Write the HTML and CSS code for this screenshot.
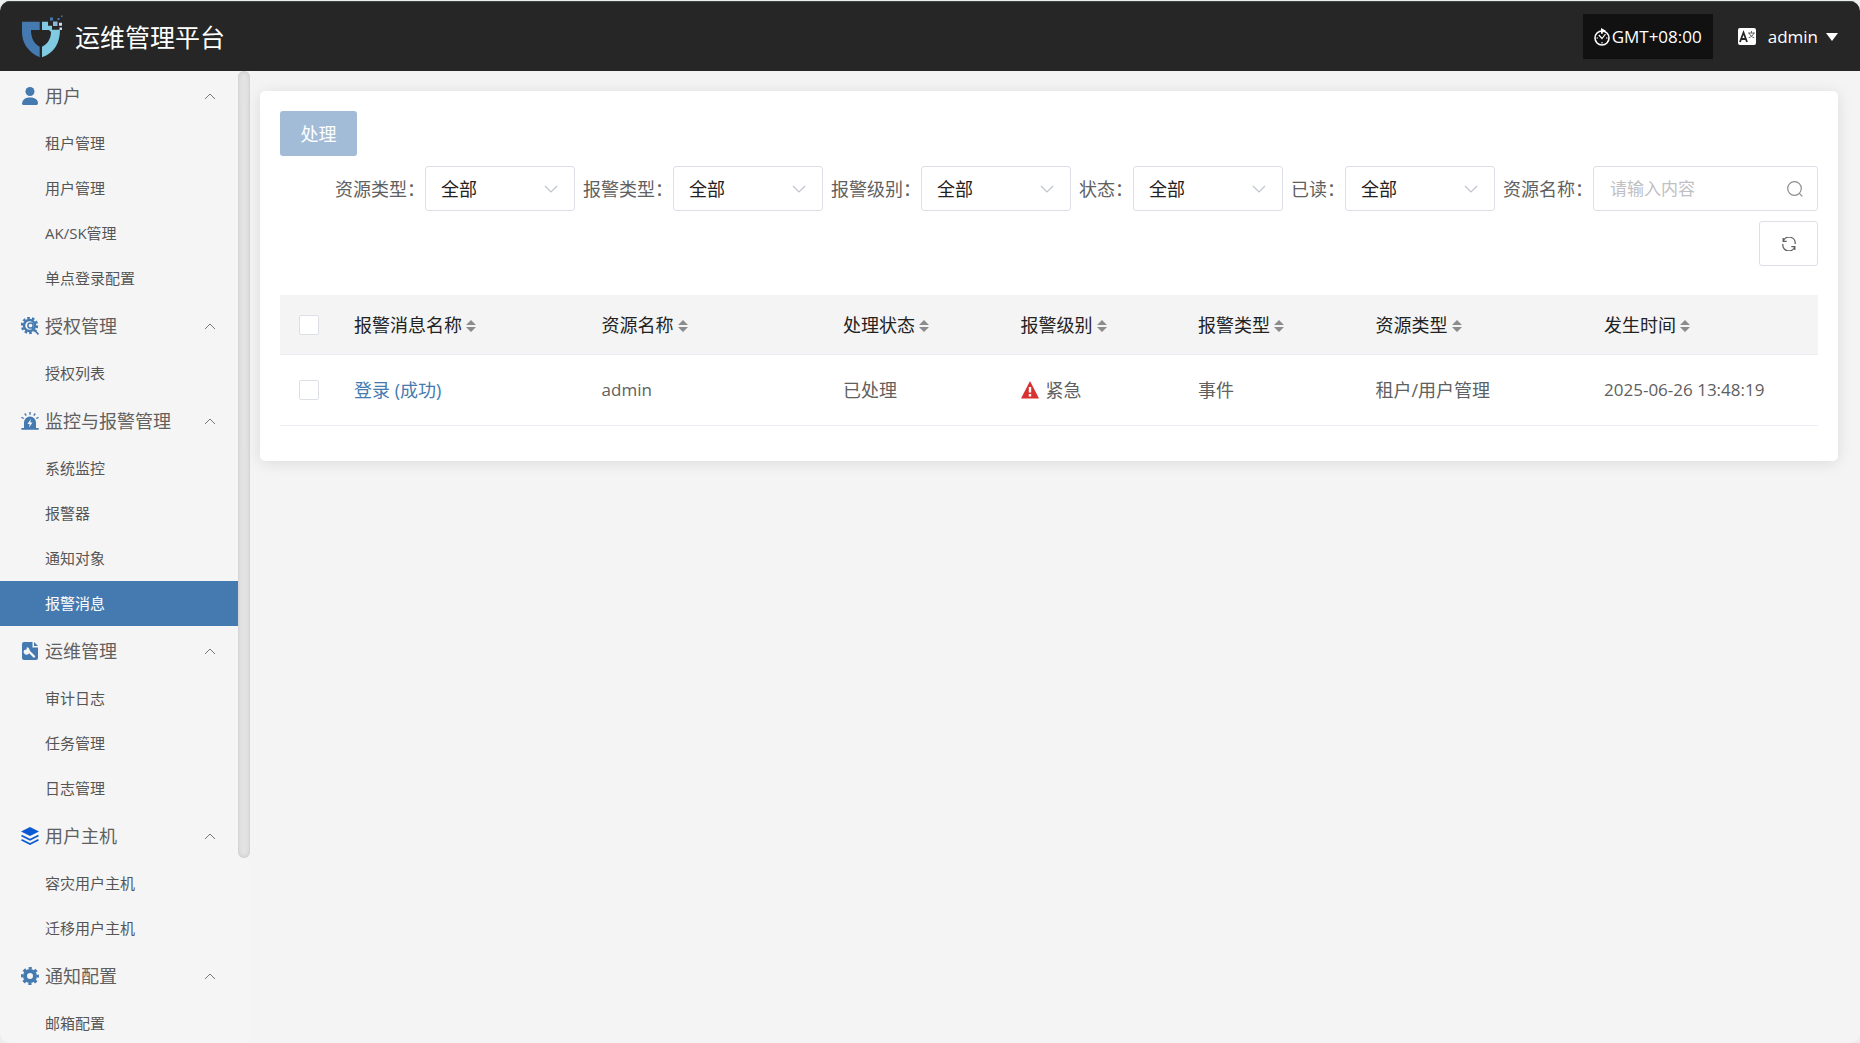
FILE: index.html
```html
<!DOCTYPE html>
<html lang="zh-CN">
<head>
<meta charset="utf-8">
<title>运维管理平台</title>
<link rel="stylesheet" href="styles.css">
</head>
<body>
<svg class="sprite" aria-hidden="true">
  <symbol id="i-up" viewBox="0 0 12 7"><path d="M1 6l5-5 5 5" fill="none" stroke="currentColor"/></symbol>
  <symbol id="i-down" viewBox="0 0 14 8"><path d="M1 1l6 6 6-6" fill="none" stroke="currentColor" stroke-width="1.2"/></symbol>
  <symbol id="i-sort" viewBox="0 0 10 14"><path d="M5 1l5 5H0zM5 13l5-5H0z" fill="currentColor"/></symbol>
</svg>
<div class="app">
  <header class="topbar">
    <a class="brand" href="#">
      <svg class="logo" viewBox="0 0 42 43" aria-hidden="true">
        <path fill="#457ab0" d="M0 6.700H17.700V15H9C9 23 12 29 17.700 31.700V42.300C6 37 0 28 0 17Z"/>
        <path fill="#80cbe2" d="M20 6.700h6v4h4v4h8C38 28 32 38 20 42.300V31.700C26 29 29 23 29 17l-2-2H20Z"/>
        <path fill="#457ab0" d="M28 2.500h3v3h-3zM35.500 3h2v2h-2zM39 .5h1.500V2H39z"/>
        <path fill="#8fb4d8" d="M31 6.500h4.500V11H31z"/>
        <path fill="#cfdbe8" d="M37 7.700h3v3h-3zM37.500 12.500H40V15h-2.500z"/>
      </svg>
      <span class="title">运维管理平台</span>
    </a>
    <div class="tools">
      <button class="tz" type="button">
        <svg class="clock" viewBox="0 0 16 18" aria-hidden="true"><circle cx="8" cy="10" r="7" fill="none" stroke="#fff" stroke-width="1.600"/><path d="M7 0l5 2.800L7 5.500z" fill="#fff"/><path d="M4.800 7L8 10.500 11.500 6M8 4.500V6M8 14v1.500M2.500 10H4M12 10h1.500" fill="none" stroke="#fff" stroke-width="1.200"/></svg><span>GMT+08:00</span>
      </button>
      <button class="plain" type="button" aria-label="语言">
        <svg class="lang" viewBox="0 0 18 17" aria-hidden="true"><rect width="18" height="17" rx="2" fill="#fff"/><path d="M2 14L5.500 4.500 9 14M3.200 11h4.600" fill="none" stroke="#262626" stroke-width="1.800"/><path d="M10 5h7M13.500 3v2M11.300 5c.7 2.500 2.500 4 5 4.800M15.700 5c-.7 2.500-2.500 4-5 4.800" fill="none" stroke="#555" stroke-width=".9"/></svg>
      </button>
      <button class="plain account" type="button"><span>admin</span><svg class="caret" viewBox="0 0 12 8" aria-hidden="true"><path d="M0 0h12L6 8z" fill="#fff"/></svg></button>
    </div>
  </header>
  <div class="body">
    <aside class="side">
      <nav class="menu">
        <button class="group" type="button"><svg class="gi" viewBox="0 0 18 18"><circle cx="9" cy="4.500" r="4.500" fill="currentColor"/><path d="M1 18c0-5 2.500-7.500 8-7.500S17 13 17 16c0 1.500-1 2-2 2H3c-1 0-2-.3-2-1.500z" fill="currentColor"/></svg><span>用户</span><svg class="up"><use href="#i-up"/></svg></button>
        <a class="item" href="#">租户管理</a>
        <a class="item" href="#">用户管理</a>
        <a class="item" href="#">AK/SK管理</a>
        <a class="item" href="#">单点登录配置</a>
        <button class="group" type="button"><svg class="gi" viewBox="0 0 18 18"><circle cx="8.500" cy="8.500" r="5.500" fill="none" stroke="currentColor" stroke-width="2.400"/><circle cx="8.500" cy="8.500" r="7.500" fill="none" stroke="currentColor" stroke-width="2.400" stroke-dasharray="2.600 2.100"/><path d="M11.500 17.500L16.500 12" stroke="#f5f5f5" stroke-width="2"/><circle cx="9.500" cy="8.500" r="2.600" fill="none" stroke="currentColor" stroke-width="1.500"/><path d="M11 10l6.500 7.500M13.500 15l2-2" stroke="currentColor" stroke-width="1.700"/></svg><span>授权管理</span><svg class="up"><use href="#i-up"/></svg></button>
        <a class="item" href="#">授权列表</a>
        <button class="group" type="button"><svg class="gi" viewBox="0 0 18 18"><path d="M3 16v-5.500a6 6 0 0112 0V16h2.700v1.800H.3V16z" fill="currentColor"/><path d="M9 0v2.800M3.800 1.500l1.400 2.200M14.200 1.500l-1.400 2.200M.5 5.300l2.300 1.200M17.500 5.300l-2.300 1.200" stroke="currentColor" stroke-width="1.400"/><path d="M9.800 7l-3.300 5h2.200l-.7 3.500 3.500-5H9.300z" fill="#f5f5f5"/></svg><span>监控与报警管理</span><svg class="up"><use href="#i-up"/></svg></button>
        <a class="item" href="#">系统监控</a>
        <a class="item" href="#">报警器</a>
        <a class="item" href="#">通知对象</a>
        <a class="item active" href="#" aria-current="page">报警消息</a>
        <button class="group" type="button"><svg class="gi" viewBox="0 0 18 18"><path d="M3 0h8.500v5.500H17V16a2 2 0 01-2 2H3a2 2 0 01-2-2V2a2 2 0 012-2z" fill="currentColor"/><path d="M13 0l4 4h-4z" fill="currentColor"/><path d="M7 8.500l6 6" stroke="#f5f5f5" stroke-width="2.400" stroke-linecap="round"/><path d="M5.800 5.200l-.2 2.400-2.400.3A3 3 0 108.500 9 3 3 0 005.800 5.200z" fill="#f5f5f5"/></svg><span>运维管理</span><svg class="up"><use href="#i-up"/></svg></button>
        <a class="item" href="#">审计日志</a>
        <a class="item" href="#">任务管理</a>
        <a class="item" href="#">日志管理</a>
        <button class="group" type="button"><svg class="gi layers" viewBox="0 0 18 18"><path d="M9 0l9 4.500L9 9 0 4.500z" fill="currentColor"/><path d="M.5 8.500L9 12.700l8.500-4.200M.5 12.800L9 17l8.500-4.200" fill="none" stroke="currentColor" stroke-width="1.800"/></svg><span>用户主机</span><svg class="up"><use href="#i-up"/></svg></button>
        <a class="item" href="#">容灾用户主机</a>
        <a class="item" href="#">迁移用户主机</a>
        <button class="group" type="button"><svg class="gi" viewBox="0 0 18 18"><circle cx="9" cy="9" r="5" fill="none" stroke="currentColor" stroke-width="4"/><circle cx="9" cy="9" r="7.800" fill="none" stroke="currentColor" stroke-width="2.400" stroke-dasharray="3.200 2.926" stroke-dashoffset="1.600"/></svg><span>通知配置</span><svg class="up"><use href="#i-up"/></svg></button>
        <a class="item" href="#">邮箱配置</a>
      </nav>
      <div class="rail"><div class="thumb"></div></div>
    </aside>
    <main class="main">
      <section class="card">
        <button class="handle" type="button" disabled>处理</button>
        <form class="filters">
          <div class="field"><label for="f1">资源类型：</label><div class="pick"><select id="f1"><option>全部</option></select><svg><use href="#i-down"/></svg></div></div>
          <div class="field"><label for="f2">报警类型：</label><div class="pick"><select id="f2"><option>全部</option></select><svg><use href="#i-down"/></svg></div></div>
          <div class="field"><label for="f3">报警级别：</label><div class="pick"><select id="f3"><option>全部</option></select><svg><use href="#i-down"/></svg></div></div>
          <div class="field"><label for="f4">状态：</label><div class="pick"><select id="f4"><option>全部</option></select><svg><use href="#i-down"/></svg></div></div>
          <div class="field"><label for="f5">已读：</label><div class="pick"><select id="f5"><option>全部</option></select><svg><use href="#i-down"/></svg></div></div>
          <div class="field"><label for="f6">资源名称：</label><div class="search"><input id="f6" type="text" placeholder="请输入内容"><svg viewBox="0 0 16 16"><circle cx="7.500" cy="7.500" r="6.800" fill="none" stroke="currentColor" stroke-width="1.200"/><path d="M12.300 12.300l3 3" stroke="currentColor" stroke-width="1.200"/></svg></div></div>
          <button class="refresh" type="button" aria-label="刷新"><svg viewBox="0 0 14 14" fill="none" stroke="currentColor" stroke-width="1.300"><path d="M1.200 4.200A6.200 6.200 0 0113.200 7M12.800 9.800A6.200 6.200 0 01.8 7M1.200 1v3.300h3.500M12.800 13V9.700H9.300"/></svg></button>
        </form>
        <table class="grid">
          <colgroup><col class="c-check"><col class="c-name"><col class="c-res"><col class="c-std"><col class="c-std"><col class="c-std"><col class="c-type"><col></colgroup>
          <thead>
            <tr>
              <th class="tick"><input type="checkbox" aria-label="全选"></th>
              <th>报警消息名称<svg><use href="#i-sort"/></svg></th>
              <th>资源名称<svg><use href="#i-sort"/></svg></th>
              <th>处理状态<svg><use href="#i-sort"/></svg></th>
              <th>报警级别<svg><use href="#i-sort"/></svg></th>
              <th>报警类型<svg><use href="#i-sort"/></svg></th>
              <th>资源类型<svg><use href="#i-sort"/></svg></th>
              <th>发生时间<svg><use href="#i-sort"/></svg></th>
            </tr>
          </thead>
          <tbody>
            <tr>
              <td class="tick"><input type="checkbox" aria-label="选择此行"></td>
              <td><a href="#">登录 (成功)</a></td>
              <td class="latin">admin</td>
              <td>已处理</td>
              <td><span class="level"><svg viewBox="0 0 18 18"><path d="M9 0l9 17.500H0z" fill="#d93030"/><path d="M9 6v5.500M9 13v2.500" stroke="#fff" stroke-width="2.400"/></svg>紧急</span></td>
              <td>事件</td>
              <td>租户/用户管理</td>
              <td class="latin">2025-06-26 13:48:19</td>
            </tr>
          </tbody>
        </table>
      </section>
    </main>
  </div>
</div>
</body>
</html>
```
FILE: styles.css
```css
* { box-sizing: border-box; }
body {
  margin: 0;
  padding-top: 1px;
  height: 100vh;
  background: #eceeed;
  color: #606060;
  font-family: "Open Sans", "Noto Sans CJK SC", sans-serif;
  font-size: 18px;
  line-height: 24px;
}
button, input, select { font: inherit; color: inherit; margin: 0; }
button { border: 0; background: none; padding: 0; }
a { color: inherit; text-decoration: none; }
svg { display: block; flex: none; }
.sprite { display: none; }

.app {
  height: 100%;
  display: flex;
  flex-direction: column;
  border-radius: 10px;
  overflow: hidden;
  background: #f5f5f5;
}

.topbar {
  flex: none;
  height: 70px;
  padding: 0 22px;
  display: flex;
  align-items: center;
  justify-content: space-between;
  background: #262626;
  border-top: 1px solid #414745;
  color: #fff;
}
.brand { display: flex; align-items: center; gap: 11px; }
.logo { width: 42px; height: 43px; }
.title { font-size: 25px; line-height: 36px; }
.tools { display: flex; align-items: center; font-size: 17px; }
.tz {
  height: 45px;
  width: 130px;
  margin-right: 25px;
  display: flex;
  align-items: center;
  justify-content: center;
  gap: 2px;
  background: #111;
}
.clock { width: 16px; height: 18px; }
.lang { width: 18px; height: 17px; }
.account { display: flex; align-items: center; gap: 8px; margin-left: 12px; }
.caret { width: 12px; height: 8px; }

.body { flex: 1; min-height: 0; display: flex; }
.side { flex: none; width: 250px; display: flex; overflow: hidden; }
.menu { flex: 1; display: flex; flex-direction: column; }
.group {
  flex: none;
  height: 50px;
  padding: 0 22px 0 21px;
  display: flex;
  align-items: center;
  gap: 6px;
  text-align: left;
}
.group span { flex: 1; }
.gi { width: 18px; height: 18px; color: #457ab0; }
.layers { color: #0a5bd3; }
.up { width: 12px; height: 7px; color: #777; }
.item {
  flex: none;
  height: 45px;
  padding-left: 45px;
  font-size: 15px;
  line-height: 45px;
  color: #555;
}
.active { background: #457ab0; color: #fff; }
.rail { width: 12px; }
.thumb {
  height: 81%;
  border-radius: 6px;
  background: #e4e4e4;
  box-shadow: inset 0 0 5px #c4c4c4;
}

.main { flex: 1; min-width: 0; padding: 20px 22px 20px 10px; background: #f4f4f4; }
.card {
  padding: 20px 20px 35px;
  background: #fff;
  border-radius: 5px;
  box-shadow: 0 2px 15px rgba(0, 0, 0, .1);
}
.handle {
  display: block;
  width: 77px;
  height: 45px;
  border-radius: 3px;
  background: #a2bcd8;
  color: #fff;
}
.filters {
  display: flex;
  flex-wrap: wrap;
  justify-content: flex-end;
  gap: 10px 8px;
  margin: 10px 0 29px;
}
.field { display: flex; align-items: center; }
.pick, .search { display: grid; align-items: center; }
.pick > *, .search > * { grid-area: 1 / 1; }
.pick svg, .search svg { justify-self: end; pointer-events: none; }
select, .search input, .refresh {
  height: 45px;
  border: 1px solid #dcdfe6;
  border-radius: 3px;
  background: #fff;
}
select { width: 150px; padding: 0 15px; appearance: none; color: #222; }
.pick svg { width: 14px; height: 8px; margin-right: 17px; color: #c0c4cc; }
.search input { width: 225px; padding: 0 16px; font-size: 17px; }
.search input::placeholder { color: #bfc0c4; }
.search svg { width: 16px; height: 16px; margin-right: 15px; color: #8c8c8c; }
.refresh { width: 59px; display: grid; place-items: center; }
.refresh svg { width: 14px; height: 14px; }

.grid { width: 100%; table-layout: fixed; border-collapse: separate; border-spacing: 0; }
.c-check { width: 61px; }
.c-name { width: 16.1%; }
.c-res { width: 15.7%; }
.c-std { width: 11.54%; }
.c-type { width: 14.86%; }
.grid th, .grid td {
  padding: 0 0 0 13px;
  border-bottom: 1px solid #ebeef5;
  text-align: left;
  font-weight: 400;
  white-space: nowrap;
}
.grid th { height: 60px; background: #f4f4f4; color: #222; }
.grid td { height: 71px; }
.grid th svg { display: inline-block; width: 10px; height: 14px; margin-left: 4px; vertical-align: -1px; color: #8c8c8c; }
.grid .tick { padding-left: 19px; }
.grid td a { color: #457ab0; }
.grid .latin { font-size: 17px; }
.tick input {
  display: block;
  appearance: none;
  width: 20px;
  height: 20px;
  border: 1px solid #dcdfe6;
  border-radius: 2px;
  background: #fff;
}
.level { display: flex; align-items: center; gap: 7px; }
.level svg { width: 18px; height: 18px; }
```
